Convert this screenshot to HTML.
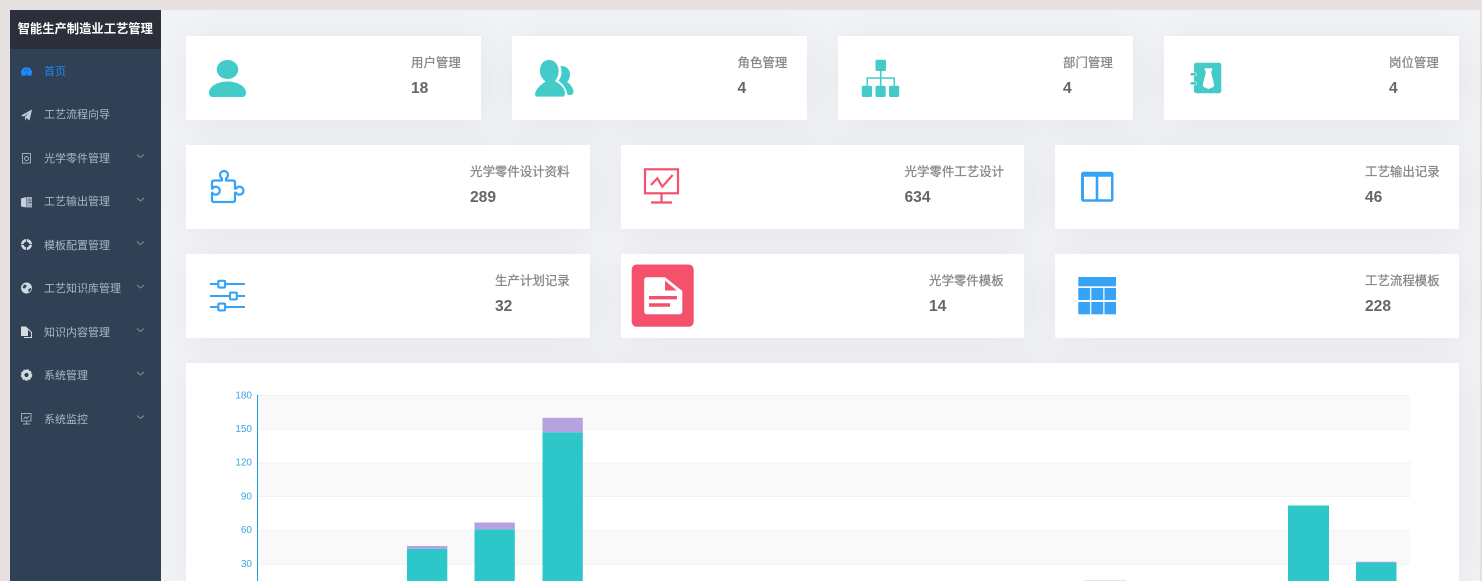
<!DOCTYPE html>
<html lang="zh"><head><meta charset="utf-8">
<style>
*{box-sizing:border-box}
html,body{margin:0;padding:0;width:1482px;height:581px;overflow:hidden;background:#e6e0df;font-family:"Liberation Sans","Noto Sans CJK SC",sans-serif}
#wrap{position:absolute;left:0;top:0;width:1482px;height:581px;overflow:hidden;filter:blur(.3px)}
.card,.m,svg.i,.l,.n{position:absolute}
#main{position:absolute;left:160px;top:10px;width:1320px;height:571px;background:#f0f2f6}
#side{position:absolute;left:10px;top:10px;width:150.5px;height:571px;background:#304156}
#head{position:absolute;left:10px;top:10px;width:150.5px;height:39px;background:#2b2f3a;color:#fff;font-weight:bold;font-size:12.3px;line-height:38px;text-align:center;white-space:nowrap}
.m{left:44px;font-size:11px;line-height:16px;color:#bfcbd9;white-space:nowrap;opacity:.85}
.card{background:#fff;box-shadow:4px 4px 40px rgba(0,0,0,.05)}
.l{font-size:12.45px;line-height:16px;color:#858585;white-space:nowrap;-webkit-text-stroke:.25px #858585}
.n{font-size:15.6px;line-height:18px;color:#666;font-weight:bold}
</style></head><body>
<div id="wrap">
<div id="main"></div>
<div id="side"></div>
<div id="head">智能生产制造业工艺管理</div>

<div class="m" style="top:63.500px;color:#2088f0;opacity:1">首页</div>
<div class="m" style="top:107px">工艺流程向导</div>
<div class="m" style="top:150.500px">光学零件管理</div>
<div class="m" style="top:194px">工艺输出管理</div>
<div class="m" style="top:237.500px">模板配置管理</div>
<div class="m" style="top:281px">工艺知识库管理</div>
<div class="m" style="top:324.500px">知识内容管理</div>
<div class="m" style="top:368px">系统管理</div>
<div class="m" style="top:411.500px">系统监控</div>

<svg class="i" style="left:0;top:0" width="165" height="440" viewBox="0 0 165 440">
<g fill="none" stroke="#7f8ea0" stroke-width="1">
<path d="M137 154.500l3.500 3 3.500-3M137 198l3.500 3 3.500-3M137 241.500l3.500 3 3.500-3M137 285l3.500 3 3.500-3M137 328.500l3.500 3 3.500-3M137 372l3.500 3 3.500-3M137 415.500l3.500 3 3.500-3"/>
</g>
<path d="M21 72.500c0-3 2.500-5.200 5.500-5.200s5.500 2.200 5.500 5.200c0 1.200-.3 2.200-.9 3.100h-9.200c-.6-.9-.9-1.900-.9-3.100z" fill="#1a8cff"/>
<path d="M26.500 68.500v2.500M24 70l.8 1.500M29 70l-.8 1.500M26.500 73v2.600" stroke="#304156" stroke-width=".6" fill="none"/>
<path d="M21 115.500l11-6-2.500 11-3-2.500-1.500 2.500v-3.500l4-4.500-5 4z" fill="#c4ced9"/>
<g fill="none" stroke="#a9b5c3" stroke-width=".9"><rect x="22.500" y="153.500" width="8" height="9.500"/><circle cx="26.500" cy="158.500" r="2"/></g>
<path d="M21 198.500l5.500-1.500v10.500l-5.500-1z" fill="#c8d1db"/><path d="M27 197h5v10.500h-5z" fill="#9eabb9"/><path d="M28.500 200h3M28.500 202.500h3" stroke="#304156" stroke-width=".7"/>
<circle cx="26.500" cy="244.500" r="4.200" fill="none" stroke="#d3dae2" stroke-width="2.600"/>
<path d="M26.500 239v3M26.500 247v3M21 244.500h3M29 244.500h3" stroke="#304156" stroke-width=".8"/>
<circle cx="26.500" cy="288" r="5.500" fill="#d0d8e0"/><path d="M24 284.500l3 1-2 3-2.500-.5zM28 289.500l2.500-1.500 1 1-2.500 3.500z" fill="#304156"/>
<path d="M21 326.500h5l2 2v7.500h-7z" fill="#d3dae2"/><path d="M28 329l3.500 3.500v5H24" fill="none" stroke="#d3dae2" stroke-width="1"/>
<circle cx="26.500" cy="375" r="3.500" fill="none" stroke="#d3dae2" stroke-width="2.800"/>
<circle cx="26.500" cy="375" r="5.100" fill="none" stroke="#d3dae2" stroke-width="1.200" stroke-dasharray="2.500 .9"/>
<g fill="none" stroke="#a9b5c3" stroke-width=".9"><rect x="21.500" y="413.500" width="9.500" height="7.500"/><path d="M26.500 421v2.500M23 424h7M23.500 419l2-2 1.500 1.500 2-2.500"/></g>
</svg>

<div class="card" style="left:186px;top:36px;width:295px;height:84px"></div>
<div class="card" style="left:512px;top:36px;width:295px;height:84px"></div>
<div class="card" style="left:838px;top:36px;width:295px;height:84px"></div>
<div class="card" style="left:1164px;top:36px;width:295px;height:84px"></div>
<div class="card" style="left:186px;top:145px;width:404px;height:84px"></div>
<div class="card" style="left:621px;top:145px;width:403px;height:84px"></div>
<div class="card" style="left:1055px;top:145px;width:404px;height:84px"></div>
<div class="card" style="left:186px;top:254px;width:404px;height:84px"></div>
<div class="card" style="left:621px;top:254px;width:403px;height:84px"></div>
<div class="card" style="left:1055px;top:254px;width:404px;height:84px"></div>
<div class="card" style="left:186px;top:363px;width:1273px;height:218px"></div>

<div class="l" style="left:411px;top:55px">用户管理</div><div class="n" style="left:411px;top:80px">18</div>
<div class="l" style="left:737.500px;top:55px">角色管理</div><div class="n" style="left:737.500px;top:80px">4</div>
<div class="l" style="left:1063px;top:55px">部门管理</div><div class="n" style="left:1063px;top:80px">4</div>
<div class="l" style="left:1389px;top:55px">岗位管理</div><div class="n" style="left:1389px;top:80px">4</div>
<div class="l" style="left:470px;top:164px">光学零件设计资料</div><div class="n" style="left:470px;top:189px">289</div>
<div class="l" style="left:904.500px;top:164px">光学零件工艺设计</div><div class="n" style="left:904.500px;top:189px">634</div>
<div class="l" style="left:1365px;top:164px">工艺输出记录</div><div class="n" style="left:1365px;top:189px">46</div>
<div class="l" style="left:495px;top:273px">生产计划记录</div><div class="n" style="left:495px;top:298px">32</div>
<div class="l" style="left:929px;top:273px">光学零件模板</div><div class="n" style="left:929px;top:298px">14</div>
<div class="l" style="left:1365px;top:273px">工艺流程模板</div><div class="n" style="left:1365px;top:298px">228</div>

<svg class="i" style="left:0;top:0" width="1482" height="581" viewBox="0 0 1482 581">
<g fill="#43cbca">
<ellipse cx="227.500" cy="69.500" rx="10.800" ry="9.500"/>
<path d="M209 93c0-6.500 8-11.500 18.500-11.500S246 86.500 246 93c0 2.500-1.500 4-3.500 4h-30c-2 0-3.500-1.500-3.500-4z"/>
<path d="M560.500 66c4-.5 9.500 2 9.500 8.500 0 3.500-1.500 6-3 7.500 3 1.500 5.500 5 6.500 9 .5 2-1 4-3 4h-3c-.5-5-4-11-9-14 2-3 3-6 3-9.500 0-2-.5-4-1-5.500z"/>
<path d="M539.500 71c0-6.500 4-11.500 9.500-11.500s10 5 10 11.500c0 4.500-1.500 7.500-3.500 10 3 1.500 8 4.500 9.500 10 .8 3 0 6-2 6h-25.500c-2.500 0-3.500-2-2.500-4.500 1.500-5 6.500-8.500 10-11-3-2.500-5.500-5.500-5.500-10.500z" stroke="#fff" stroke-width=".7"/>
<rect x="875.500" y="59.700" width="10.500" height="11.300" rx="1.500"/>
<rect x="861.800" y="85.700" width="10.200" height="11.300" rx="1.500"/>
<rect x="875.500" y="85.700" width="10.200" height="11.300" rx="1.500"/>
<rect x="889" y="85.700" width="10.200" height="11.300" rx="1.500"/>
<path d="M880 71h1.500v6.300h13.500v8.400h-1.500v-7h-12v7H880v-7h-12v7h-1.500v-8.400H880z"/>
<rect x="1194" y="62.700" width="27.300" height="30.600" rx="2.500"/>
<rect x="1190.200" y="72.700" width="6.300" height="3.200" rx="1.600" stroke="#fff" stroke-width=".5"/>
<rect x="1190.200" y="81.700" width="6.300" height="3.200" rx="1.600" stroke="#fff" stroke-width=".5"/>
</g>
<path d="M1204.500 68.300h8l-1.300 4 3 12.700-.8 2-4.900 2-4.900-2-.8-2 3-12.700z" fill="#fff"/>

<g fill="none" stroke="#36a3f7" stroke-width="2.200" stroke-linejoin="round">
<path d="M214 180.500h8v-2a4 4 0 1 1 4 0v2h7q2 0 2 2v6.200h1a4 4 0 1 1 0 4h-1V200q0 2-2 2H214q-2 0-2-2v-7.300h.3a4 4 0 1 0 0-4H212v-6.200q0-2 2-2z"/>
<path d="M210 284h35M210 296h35M210 307h35" stroke-width="1.900"/>
</g>
<g fill="#fff" stroke="#36a3f7" stroke-width="2.100">
<rect x="218.300" y="280.800" width="6.800" height="6.800" rx="1"/>
<rect x="230" y="292.600" width="6.800" height="6.800" rx="1"/>
<rect x="218.300" y="303.600" width="6.800" height="6.800" rx="1"/>
</g>
<g fill="none" stroke="#f4516c" stroke-width="2.200">
<rect x="645" y="169.300" width="33" height="24"/>
<path d="M661.500 193v9M651 202.500h21"/>
<path d="M651 185l6.300-6.700 5 8.400 10.400-11.700"/>
</g>
<rect x="631.700" y="264.500" width="62" height="62.300" rx="5" fill="#f4516c"/>
<path d="M647 277.300h18l17.300 13.700v20.500c0 1.700-1.300 2.800-3 2.800H647c-1.700 0-2.800-1.100-2.800-2.800v-31.400c0-1.700 1.100-2.800 2.800-2.800z" fill="#fff"/>
<path d="M665 280.500l11.700 10h-11.700z" fill="#f4516c"/>
<path d="M649 297.700h28M649 305h21" stroke="#f4516c" stroke-width="3.400" fill="none"/>
<path d="M1083.500 171.700h27.500c1.400 0 2.500 1.100 2.500 2.500v25c0 1.400-1.100 2.500-2.500 2.500h-27.500c-1.400 0-2.500-1.100-2.500-2.500v-25c0-1.400 1.100-2.500 2.500-2.500zm.5 5v22.600h11.700v-22.600zm14.300 0v22.600H1111v-22.600z" fill="#36a3f7" fill-rule="evenodd"/>
<g fill="#36a3f7">
<rect x="1078.300" y="277" width="37.700" height="9.300"/>
<rect x="1078.300" y="288" width="11.800" height="12"/><rect x="1091.300" y="288" width="12" height="12"/><rect x="1104.500" y="288" width="11.500" height="12"/>
<rect x="1078.300" y="302" width="11.800" height="12.300"/><rect x="1091.300" y="302" width="12" height="12.300"/><rect x="1104.500" y="302" width="11.500" height="12.300"/>
</g>

<g fill="#f9f9f9"><rect x="258" y="395" width="1152" height="33.700"/><rect x="258" y="463" width="1152" height="33.700"/><rect x="258" y="530.300" width="1152" height="33.700"/></g>
<path d="M258 395.500h1152M258 429h1152M258 463h1152M258 496.500h1152M258 530.500h1152M258 564h1152" stroke="#f1f1f1" stroke-width="1" fill="none"/>
<path d="M257.500 395v186" stroke="#1f9ed8" stroke-width="1"/>
<g font-family="'Liberation Sans',sans-serif" font-size="10" fill="#3aa9df" text-anchor="end">
<text x="252" y="398.500">180</text><text x="252" y="432">150</text><text x="252" y="465.500">120</text><text x="252" y="499.500">90</text><text x="252" y="533">60</text><text x="252" y="567">30</text>
</g>
<g fill="#2ec7c9">
<rect x="407" y="548.700" width="40.300" height="33"/>
<rect x="474.500" y="529.300" width="40.300" height="52"/>
<rect x="542.500" y="432.300" width="40.300" height="149"/>
<rect x="1288" y="505.500" width="41" height="76"/>
<rect x="1356" y="562.500" width="40.500" height="19"/>
</g>
<g fill="#b6a2de">
<rect x="407" y="546" width="40.300" height="2.700"/>
<rect x="474.500" y="522.500" width="40.300" height="6.800"/>
<rect x="542.500" y="417.800" width="40.300" height="14.500"/>
<rect x="1356" y="561.700" width="40.500" height="1"/>
</g>
<rect x="1085" y="580" width="41" height="1" fill="#e6e0f2"/>
</svg>
</div>
</body></html>
